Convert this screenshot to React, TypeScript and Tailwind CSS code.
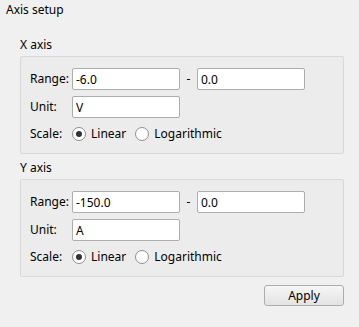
import { useState } from "react";

const inputCls =
  "h-[22px] w-[108px] shrink-0 rounded-[2px] border border-[#adadad] bg-white px-[3px] text-[12px] leading-[20px] text-black outline-none";

const Radio = ({ checked, label, onClick }: { checked: boolean; label: string; onClick: () => void }) => (
  <button type="button" onClick={onClick} className="flex items-center gap-[5px]">
    <span className="flex h-[14px] w-[14px] items-center justify-center rounded-full border border-[#8f8f8f] bg-white">
      {checked && <span className="h-[6px] w-[6px] rounded-full bg-[#333]" />}
    </span>
    <span>{label}</span>
  </button>
);

const AxisGroup = ({ title, min, max, unit }: { title: string; min: string; max: string; unit: string }) => {
  const [log, setLog] = useState(false);

  return (
    <div className="flex flex-col">
      <div className="h-[16px] leading-[16px]">{title}</div>
      <div className="mt-[3px] flex flex-col gap-[6px] rounded-[2px] border border-[#d8d8d8] bg-[#ececec] pt-[11px] pb-[9px] pl-[9px]">
        <div className="flex items-center">
          <span className="w-[42px] shrink-0">Range:</span>
          <input className={inputCls} defaultValue={min} />
          <span className="w-[17px] shrink-0 text-center">-</span>
          <input className={inputCls} defaultValue={max} />
        </div>
        <div className="flex items-center">
          <span className="w-[42px] shrink-0">Unit:</span>
          <input className={inputCls} defaultValue={unit} />
        </div>
        <div className="flex h-[20px] items-center">
          <span className="w-[42px] shrink-0">Scale:</span>
          <div className="flex gap-[9px]">
            <Radio checked={!log} label="Linear" onClick={() => setLog(false)} />
            <Radio checked={log} label="Logarithmic" onClick={() => setLog(true)} />
          </div>
        </div>
      </div>
    </div>
  );
};

export default function App() {
  return (
    <div
      className="flex h-[327px] w-[359px] flex-col bg-[#f0f0f0] text-[12px] text-black"
      style={{ fontFamily: '"Noto Sans", "Liberation Sans", sans-serif' }}
    >
      <div className="h-[20px] pt-[2px] pl-[6px] leading-[16px]">Axis setup</div>
      <div className="mt-[17px] flex flex-col gap-[6px] pr-[15px] pl-[20px]">
        <AxisGroup title="X axis" min="-6.0" max="0.0" unit="V" />
        <AxisGroup title="Y axis" min="-150.0" max="0.0" unit="A" />
        <div className="mt-[2px] flex justify-end">
          <button
            type="button"
            className="h-[21px] w-[80px] rounded-[3px] border border-[#adadad] bg-gradient-to-b from-[#f6f6f6] to-[#e3e3e3] text-[12px]"
          >
            Apply
          </button>
        </div>
      </div>
    </div>
  );
}
